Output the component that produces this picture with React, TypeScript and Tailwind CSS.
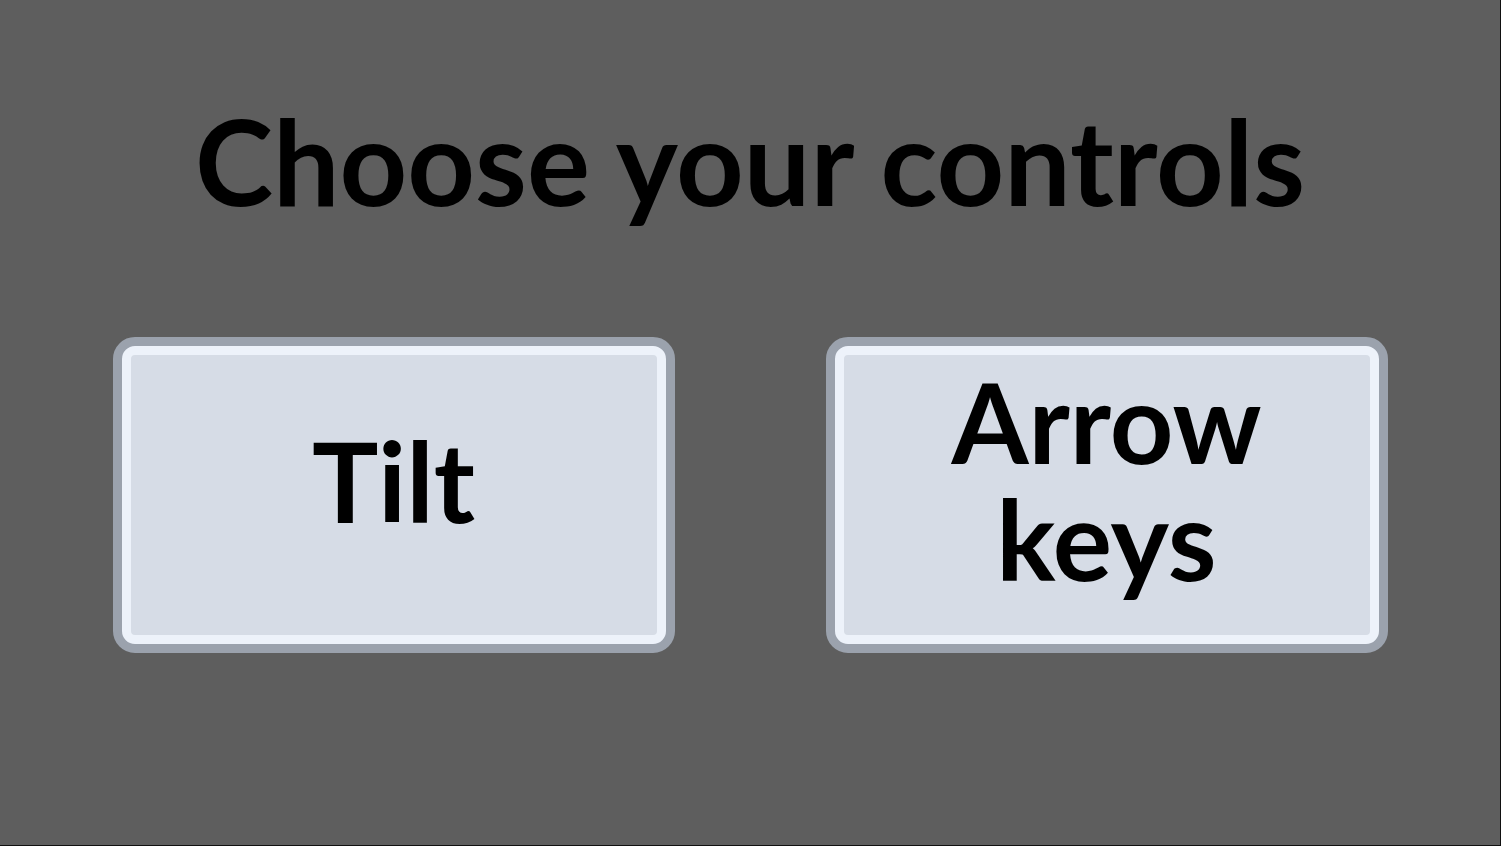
import React from 'react'

const ChoiceButton = ({ label }: { label: React.ReactNode }) => {
    return <button className="w-[562px] h-[316px] rounded-[22px] border-[9px] border-[#9ba2ad] bg-[#9ba2ad] p-0">
        <div className="w-full h-full rounded-[13px] border-[9px] border-[#edf2fa] bg-[#d6dce6] flex items-center justify-center pb-[30px]">
            <span className="text-black font-bold text-[111px] leading-[117px] text-center">{label}</span>
        </div>
    </button>
}

const App = () => {
    return <div className="w-full h-[846px] bg-[#5e5e5e] border-r border-b border-[#111] flex flex-col items-center" style={{ fontFamily: 'Lato, "Noto Sans", sans-serif' }}>
        <div className="h-[337px] w-full flex items-start justify-center pt-[102px]">
            <h1 className="text-black font-bold text-[118px] leading-none">Choose your controls</h1>
        </div>
        <div className="flex gap-[151px]">
            <ChoiceButton label="Tilt" />
            <ChoiceButton label={<>Arrow<br />keys</>} />
        </div>
    </div>
}

export default App
